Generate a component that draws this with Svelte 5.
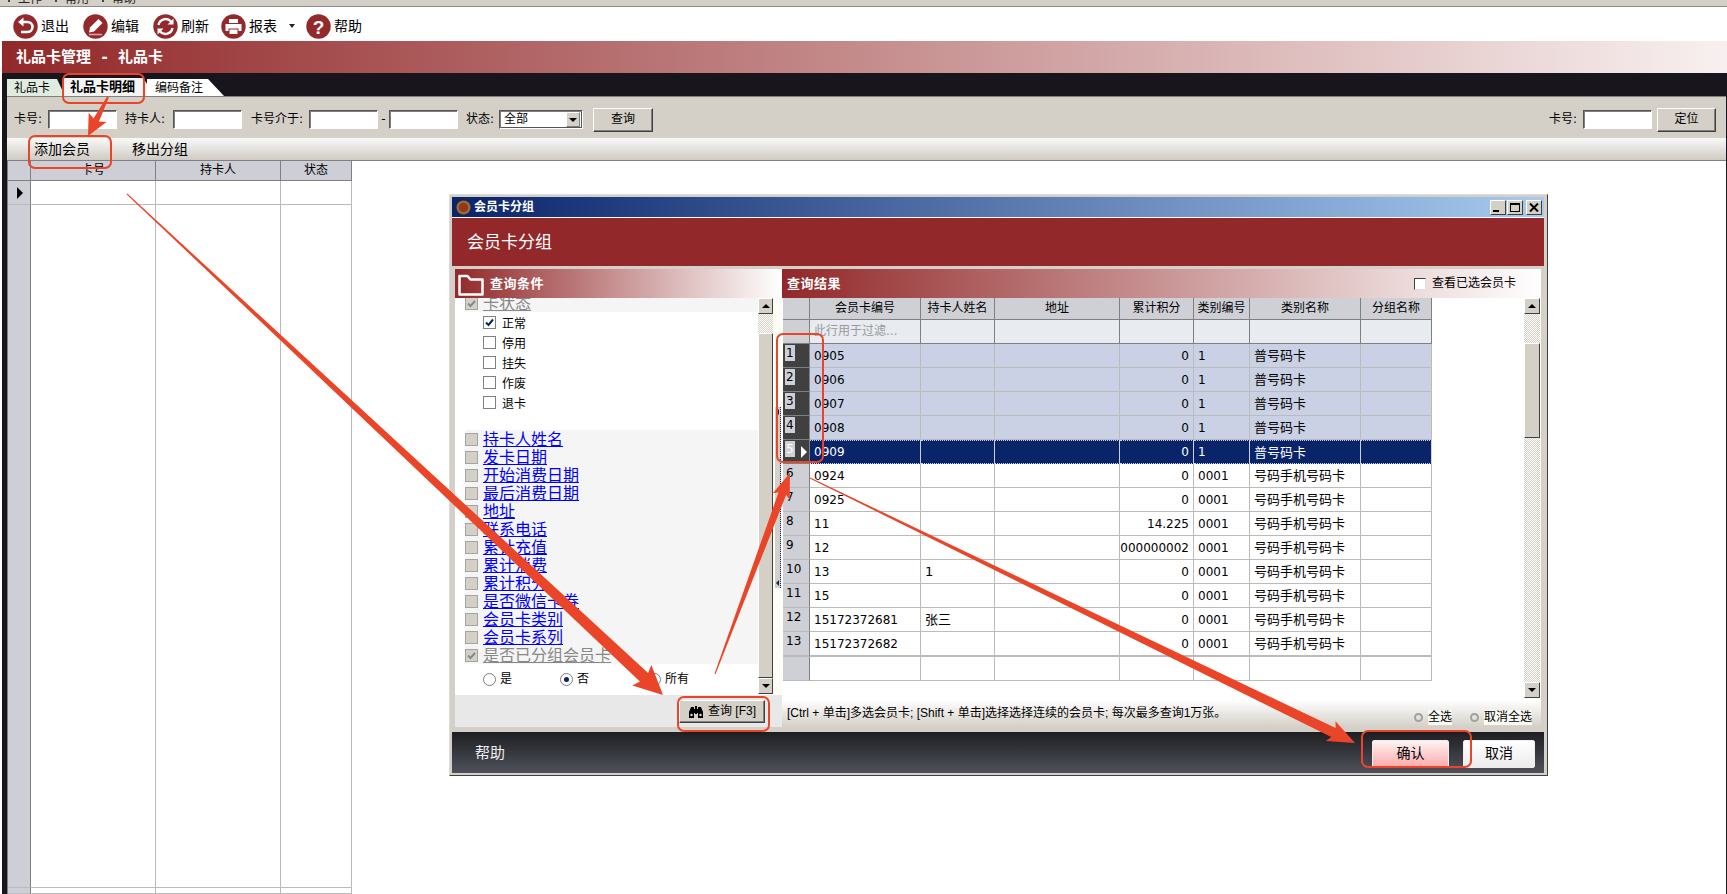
<script>
  const groups = ['持卡人姓名','发卡日期','开始消费日期','最后消费日期','地址','联系电话','累计充值','累计消费','累计积分','是否微信卡券','会员卡类别','会员卡系列'];
  const items = [['正常',true],['停用',false],['挂失',false],['作废',false],['退卡',false]];
  const cols = ['会员卡编号','持卡人姓名','地址','累计积分','类别编号','类别名称','分组名称'];
  const A = '普号码卡', B = '号码手机号码卡';
  const rows = [
    ['0905','','0','1',A],['0906','','0','1',A],['0907','','0','1',A],['0908','','0','1',A],['0909','','0','1',A],
    ['0924','','0','0001',B],['0925','','0','0001',B],['11','','14.225','0001',B],['12','','0000000002','0001',B],
    ['13','1','0','0001',B],['15','','0','0001',B],['15172372681','张三','0','0001',B],['15172372682','','0','0001',B]
  ];
  function arrow(x0, y0, x1, y1, w0, w1, hl, hw) {
    const d = Math.hypot(x1 - x0, y1 - y0), ux = (x1 - x0) / d, uy = (y1 - y0) / d, nx = -uy, ny = ux;
    const bx = x1 - ux * hl, by = y1 - uy * hl;
    const p = [
      [x0 + nx * w0 / 2, y0 + ny * w0 / 2],
      [bx + nx * w1 / 2, by + ny * w1 / 2],
      [bx + nx * hw - ux * 3, by + ny * hw - uy * 3],
      [x1, y1],
      [bx - nx * hw - ux * 3, by - ny * hw - uy * 3],
      [bx - nx * w1 / 2, by - ny * w1 / 2],
      [x0 - nx * w0 / 2, y0 - ny * w0 / 2]
    ];
    return p.map(q => q[0].toFixed(1) + ',' + q[1].toFixed(1)).join(' ');
  }
  const arrows = [
    arrow(108, 97, 88, 136, 2, 6, 18, 10),
    arrow(127, 194, 663, 695, 1, 12, 26, 14),
    arrow(715, 674, 790, 473, 1, 8, 22, 9),
    arrow(810, 478, 1355, 743, 1, 10, 24, 11)
  ];
  const boxes = [
    [63, 74, 81, 29], [29, 136, 82, 32], [777, 334, 46, 128], [678, 697, 91, 34], [1362, 731, 109, 36]
  ];
</script>

<div class="app">
  <div class="menu"><span>工作</span><span>常用</span><span>帮助</span></div>
  <div class="toolbar">
    <div class="tool">
      <svg class="ic" viewBox="0 0 25 25"><circle cx="12.5" cy="12.5" r="12.2" fill="#93292b"/><path d="M9 8h5.5a5 5 0 0 1 0 10H8" fill="none" stroke="#fff" stroke-width="2.6"/><path d="M10.5 3.5 5 8l5.500 4.500z" fill="#fff"/></svg>
      <span>退出</span>
    </div>
    <div class="tool">
      <svg class="ic" viewBox="0 0 25 25"><circle cx="12.500" cy="12.500" r="12.200" fill="#93292b"/><path d="M15.500 5l4 4-8.500 8.500-5 1 1-5z" fill="#fff"/><path d="M6 20.500h13" stroke="#d9a9aa" stroke-width="1.500"/></svg>
      <span>编辑</span>
    </div>
    <div class="tool">
      <svg class="ic" viewBox="0 0 25 25"><circle cx="12.500" cy="12.500" r="12.200" fill="#93292b"/><path d="M5.500 11a7.200 7.200 0 0 1 12.500-3.500M19.500 14a7.200 7.200 0 0 1-12.500 3.500" fill="none" stroke="#fff" stroke-width="2.400"/><path d="M20.500 4.500v6h-6zM4.500 20.500v-6h6z" fill="#fff"/></svg>
      <span>刷新</span>
    </div>
    <div class="tool tool-report">
      <svg class="ic" viewBox="0 0 25 25"><circle cx="12.500" cy="12.500" r="12.200" fill="#93292b"/><path d="M8 5h9v4H8z" fill="#fff"/><path d="M4.500 10h16v7h-3v-2.500h-10V17h-3z" fill="#fff"/><path d="M8.500 15.500h8V20h-8z" fill="#fff"/></svg>
      <span>报表</span>
      <i class="caret"></i>
    </div>
    <div class="tool">
      <svg class="ic" viewBox="0 0 25 25"><circle cx="12.500" cy="12.500" r="12.200" fill="#93292b"/><text x="12.500" y="19.500" text-anchor="middle" class="qm">?</text></svg>
      <span>帮助</span>
    </div>
  </div>
  <div class="pagehead">礼品卡管理  -  礼品卡</div>
  <div class="frame">
    <div class="tabs">
      <div class="tab t1">礼品卡</div>
      <div class="tab t2">礼品卡明细</div>
      <div class="tab t3">编码备注</div>
    </div>
    <div class="inner">
      <div class="filter">
        <label class="l34">卡号:</label><div class="inp"></div>
        <label class="l48">持卡人:</label><div class="inp"></div>
        <label class="l58">卡号介于:</label><div class="inp"></div>
        <span class="dash">-</span><div class="inp"></div>
        <label class="l36">状态:</label>
        <div class="select"><span>全部</span><b class="drop"><i class="tri-d"></i></b></div>
        <button class="btn q">查询</button>
        <div class="grow"></div>
        <label class="l34">卡号:</label><div class="inp"></div>
        <button class="btn loc">定位</button>
      </div>
      <div class="sub"><span>添加会员</span><span>移出分组</span></div>
      <div class="maingrid">
        <div class="mh rh"></div><div class="mh">卡号</div><div class="mh">持卡人</div><div class="mh">状态</div>
        <div class="mc rh"><i class="tri-r"></i></div><div class="mc"></div><div class="mc"></div><div class="mc"></div>
        <div class="mc rh"></div><div class="mc"></div><div class="mc"></div><div class="mc"></div>
        <div class="mc rh"></div><div class="mc"></div><div class="mc"></div><div class="mc"></div>
      </div>
    </div>
  </div>

  <div class="dialog">
    <div class="dtitle">
      <svg class="dico" viewBox="0 0 16 16"><circle cx="8" cy="8" r="7.500" fill="#a8672f"/><circle cx="8" cy="8" r="5" fill="#7a4220"/><circle cx="8" cy="8" r="2.500" fill="#b02a1c"/></svg>
      <span class="dname">会员卡分组</span>
      <div class="wbtns">
        <div class="wb"><i class="w-min"></i></div>
        <div class="wb"><i class="w-max"></i></div>
        <div class="wb close"><svg viewBox="0 0 10 9" width="10" height="9"><path d="M1 0.500l8 8M9 0.500l-8 8" stroke="#000" stroke-width="2"/></svg></div>
      </div>
    </div>
    <div class="banner">会员卡分组</div>
    <div class="panels">
      <section class="lp">
        <div class="ph lph">
          <svg class="folder" viewBox="0 0 26 22"><path d="M1.500 20.500V2h8l3 3.500h12v15z" fill="none" stroke="#fff" stroke-width="2.500" stroke-linejoin="round"/></svg>
          <strong>查询条件</strong>
        </div>
        <div class="lbody">
          <div class="list">
            <div class="g off first"><i class="cb gray chk"><svg viewBox="0 0 11 11"><path d="M2 5.500l2.500 2.500L9 3" fill="none" stroke="#888" stroke-width="2"/></svg></i><span>卡状态</span></div>
            {#each items as it}
              <div class="item"><i class="cb white">{#if it[1]}<svg viewBox="0 0 11 11"><path d="M2 5.500l2.500 2.500L9 2.500" fill="none" stroke="#0a246a" stroke-width="2"/></svg>{/if}</i><span>{it[0]}</span></div>
            {/each}
            <div class="spacer"></div>
            {#each groups as g}
              <div class="g"><i class="cb gray"></i><a href="#top">{g}</a></div>
            {/each}
            <div class="g off"><i class="cb gray chk"><svg viewBox="0 0 11 11"><path d="M2 5.500l2.500 2.500L9 3" fill="none" stroke="#888" stroke-width="2"/></svg></i><span>是否已分组会员卡</span></div>
            <div class="radios">
              <span class="r r1"><i class="rd"></i>是</span>
              <span class="r r2"><i class="rd on"></i>否</span>
              <span class="r r3"><i class="rd"></i>所有</span>
            </div>
          </div>
          <div class="sb sbl">
            <div class="sbtn"><i class="tri-u"></i></div>
            <div class="chk-track t1h"></div>
            <div class="thumb"></div>
            <div class="sbtn"><i class="tri-d"></i></div>
          </div>
          <div class="split"><div class="splitbar"><i class="sp-a"></i><i class="sp-b"></i></div></div>
        </div>
        <div class="lfoot">
          <button class="btn find">
            <svg viewBox="0 0 16 14" width="16" height="14"><path d="M1 13V7l2-5h3v2h1V1h2v3h1V2h3l2 5v6h-5V8H9v1H7V8H6v5z" fill="#000"/><circle cx="3.500" cy="10" r="1.200" fill="#ddd"/><circle cx="12.500" cy="10" r="1.200" fill="#ddd"/></svg>
            <span>查询 [F3]</span>
          </button>
        </div>
      </section>

      <section class="rp">
        <div class="ph rph">
          <strong>查询结果</strong>
          <i class="grow"></i>
          <i class="cb view"></i><span class="viewt">查看已选会员卡</span>
        </div>
        <div class="rbody">
          <div class="tablewrap">
            <div class="tr th">
              <div class="hc"></div>
              {#each cols as c}<div class="hc">{c}</div>{/each}
            </div>
            <div class="tr fl">
              <div class="hc"></div>
              <div class="fc ph-t">此行用于过滤...</div>
              {#each cols.slice(1) as c}<div class="fc"></div>{/each}
            </div>
            {#each rows as row, i}
              <div class="tr" class:sel={i < 4} class:cur={i === 4} class:last={i === 12}>
                <div class="td rn"><b>{i + 1}</b>{#if i === 4}<i class="tri-w"></i>{/if}</div>
                <div class="td">{row[0]}</div>
                <div class="td cn">{row[1]}</div>
                <div class="td"></div>
                <div class="td num"><span>{row[2]}</span></div>
                <div class="td">{row[3]}</div>
                <div class="td cn">{row[4]}</div>
                <div class="td"></div>
              </div>
            {/each}
            <div class="tr">
              <div class="td rn"></div><div class="td"></div><div class="td"></div><div class="td"></div>
              <div class="td"></div><div class="td"></div><div class="td"></div><div class="td"></div>
            </div>
          </div>
          <div class="sb sbr">
            <div class="sbtn"><i class="tri-u"></i></div>
            <div class="chk-track t2h"></div>
            <div class="thumb t2t"></div>
            <div class="chk-track fill"></div>
            <div class="sbtn"><i class="tri-d"></i></div>
          </div>
        </div>
        <div class="hint">
          <span class="tip">[Ctrl + 单击]多选会员卡; [Shift + 单击]选择选择连续的会员卡; 每次最多查询1万张。</span>
          <i class="grow"></i>
          <i class="ring"></i><span class="lnk">全选</span>
          <i class="ring r2nd"></i><span class="lnk">取消全选</span>
        </div>
      </section>
    </div>
    <div class="dfoot">
      <span class="help">帮助</span>
      <i class="grow"></i>
      <button class="fbtn ok">确认</button>
      <button class="fbtn no">取消</button>
    </div>
  </div>

  <svg class="anno" width="1727" height="894" viewBox="0 0 1727 894">
    {#each arrows as a}<polygon points={a} fill="#ea4528"/>{/each}
    {#each boxes as b}<rect x={b[0]} y={b[1]} width={b[2]} height={b[3]} rx="6" fill="none" stroke="#ea4528" stroke-width="2"/>{/each}
  </svg>
</div>

<style>
  :global(body) { margin: 0; background: #fff; }
  * { box-sizing: border-box; }
  i { display: block; font-style: normal; }
  .app {
    position: relative; width: 1727px; height: 894px; overflow: hidden;
    display: flex; flex-direction: column; background: #fff; color: #000;
    font: 12px/1.2 "DejaVu Sans", "Noto Sans CJK SC", sans-serif;
  }
  .grow { flex: 1; }
  .menu {
    height: 7px; flex: none; background: #d4d0c8; border-bottom: 1px solid #8c8c88;
    overflow: hidden; display: flex; gap: 23px; padding-left: 18px; color: #222; line-height: 1px;
  }
  .menu span { display: block; transform: translateY(-1px); position: relative; }
  .menu span::before { content: ""; position: absolute; left: -10px; top: 1px; width: 2px; height: 2px; background: #444; }
  .toolbar {
    height: 34px; flex: none; margin-left: 2px; padding: 4px 0 0 11px; display: flex; align-items: center; gap: 14px;
    font-size: 14px;
  }
  .tool { display: flex; align-items: center; gap: 3px; }
  .ic { width: 25px; height: 25px; flex: none; }
  .qm { font: bold 19px "Liberation Sans", sans-serif; fill: #fff; }
  .tool-report { margin-left: -2px; margin-right: -3px; }
  .caret { width: 0; height: 0; margin-left: 9px; border: 3px solid transparent; border-top: 4px solid #222; border-bottom: 0; }
  .pagehead {
    height: 32px; flex: none; margin-left: 2px; padding-left: 14px; display: flex; align-items: center;
    color: #fff; font-weight: 700; font-size: 15px; white-space: pre;
    background: linear-gradient(90deg, #922829, #f8f0f0);
  }
  .frame {
    flex: 1; min-height: 0; margin-left: 2px; padding: 0 1px 0 5px; background: #18161c;
    display: flex; flex-direction: column;
  }
  .tabs { height: 23px; flex: none; display: flex; align-items: flex-end; }
  .tab { height: 17px; padding-top: 1px; line-height: 16px; }
  .t1 { width: 58px; padding-left: 7px; background: #e0ece0; clip-path: polygon(0 0, 50px 0, 100% 100%, 0 100%); }
  .t2 {
    width: 91px; height: 18px; margin-left: -1px; padding-left: 6px; background: #f4f4f4; font-weight: 700; font-size: 13px;
    clip-path: polygon(0 0, 79px 0, 100% 100%, 0 100%); position: relative;
  }
  .t3 { width: 77px; margin-left: -8px; padding-left: 8px; background: #fff; clip-path: polygon(0 0, 61px 0, 100% 100%, 0 100%); }
  .inner { flex: 1; min-height: 0; display: flex; flex-direction: column; background: #fff; }
  .filter {
    height: 42px; flex: none; padding: 4px 10px 0 7px; display: flex; align-items: center; background: #d4d0c8;
    border-top: 1px solid #808080;
  }
  .filter label { display: block; }
  .l34 { width: 34px; }
  .l48 { width: 48px; margin-left: 8px; }
  .l58 { width: 58px; margin-left: 9px; }
  .l36 { width: 36px; margin-left: 5px; padding-left: 3px; white-space: nowrap; }
  .dash { width: 11px; text-align: center; }
  .inp {
    width: 69px; height: 19px; background: #fff; border: 1px solid; border-color: #555 #fff #fff #555;
    box-shadow: inset 1px 1px #808080;
  }
  .select {
    width: 84px; height: 19px; background: #fff; border: 1px solid; border-color: #555 #fff #fff #555;
    box-shadow: inset 1px 1px #808080, inset -1px -1px #555; display: flex; align-items: center;
    padding: 0 2px 0 4px; justify-content: space-between;
  }
  .drop { width: 14px; height: 15px; background: #d4d0c8; display: flex; align-items: center; justify-content: center; border: 1px solid; border-color: #fff #808080 #808080 #fff; }
  .tri-d { width: 0; height: 0; border: 4px solid transparent; border-top: 4px solid #000; border-bottom: 0; }
  .tri-u { width: 0; height: 0; border: 4px solid transparent; border-bottom: 4px solid #000; border-top: 0; }
  .btn {
    font: inherit; color: #000; background: #d4d0c8; border: 1px solid; border-color: #fff #404040 #404040 #fff;
    box-shadow: inset -1px -1px #808080; padding: 0;
  }
  .q { width: 60px; height: 24px; margin-left: 10px; }
  .loc { width: 59px; height: 24px; margin-left: 5px; }
  .sub {
    height: 23px; flex: none; padding-left: 27px; display: flex; gap: 42px; align-items: center; font-size: 14px;
    background: linear-gradient(#f9f9f7, #cfcbc4); border-bottom: 1px solid #808080;
  }
  .maingrid {
    flex: 1; min-height: 0; border-left: 1px solid #808080; display: grid;
    grid-template-columns: 23px 125px 125px 71px; grid-template-rows: 20px 24px 683px 6px; align-content: start; justify-content: start;
    overflow: hidden;
  }
  .mh {
    background: #cdced6; border-right: 1px solid #808080; border-bottom: 1px solid #808080;
    display: flex; align-items: center; justify-content: center; font-size: 12px;
  }
  .mc { border-right: 1px solid #bbb; border-bottom: 1px solid #bbb; }
  .rh { background: #cdced6; border-right-color: #808080; display: flex; align-items: center; justify-content: center; }
  .tri-r { width: 0; height: 0; border: 6px solid transparent; border-left: 6px solid #000; border-right: 0; margin-left: 2px; }

  .dialog {
    position: absolute; left: 449px; top: 194px; width: 1099px; height: 582px; padding: 2px 3px 2px 2px;
    background: #d4d0c8; border: 1px solid; border-color: #ddd #404040 #404040 #ddd;
    display: flex; flex-direction: column;
  }
  .dtitle {
    height: 21px; flex: none; border-bottom: 1px solid #fff; display: flex; align-items: center; padding: 0 2px 0 4px; gap: 3px;
    background: linear-gradient(90deg, #0a246a, #a6caf0); color: #fff; font-weight: 700; font-size: 12px;
  }
  .dico { width: 15px; height: 15px; }
  .dname { flex: 1; }
  .wbtns { display: flex; gap: 1px; }
  .wb {
    width: 16px; height: 15px; background: #d4d0c8; border: 1px solid; border-color: #fff #404040 #404040 #fff;
    display: flex; align-items: center; justify-content: center; position: relative;
  }
  .close { margin-left: 2px; }
  .w-min { width: 6px; height: 2px; background: #000; margin: 7px 4px 0 0; }
  .w-max { width: 10px; height: 9px; border: 1px solid #000; border-top-width: 2px; }
  .banner {
    height: 48px; flex: none; background: #922829; color: #fff; font-size: 17px; padding-left: 15px;
    display: flex; align-items: center;
  }
  .panels { height: 458px; flex: none; margin: 3px 3px 5px 3px; display: flex; background: #fff; }
  .lp { width: 327px; flex: none; display: flex; flex-direction: column; background: #fff; }
  .rp { flex: 1; min-width: 0; display: flex; flex-direction: column; background: #fff; }
  .ph {
    height: 29px; flex: none; display: flex; align-items: center; color: #fff; font-size: 13px; position: relative; z-index: 1;
  }
  .ph strong { font-weight: 700; letter-spacing: 0.5px; }
  .lph { background: linear-gradient(90deg, #922829, #fff); padding-left: 3px; gap: 6px; }
  .folder { width: 26px; height: 22px; margin-top: 3px; }
  .rph { background: linear-gradient(90deg, #922829, #fff); padding: 0 25px 0 5px; }
  .lbody { flex: 1; min-height: 0; display: flex; }
  .list { width: 303px; flex: none; padding-left: 10px; overflow: hidden; }
  .g {
    height: 18px; display: flex; align-items: center; gap: 5px; background: #f5f5f5; font-size: 16px; white-space: nowrap;
  }
  .first { margin-top: -4px; }
  .g a { color: #0000ff; text-decoration: underline; line-height: 18px; padding-top: 2px; }
  .off span { color: #888; text-decoration: underline; padding-top: 2px; }
  .cb { width: 13px; height: 13px; flex: none; }
  .cb svg { display: block; width: 11px; height: 11px; }
  .gray { background: #d4d0c8; border: 1px solid #a5a5a0; }
  .white { background: #fff; border: 1px solid #808080; }
  .item { height: 20px; display: flex; align-items: center; gap: 6px; padding: 1px 0 0 18px; }
  .item span { padding-top: 3px; }
  .spacer { height: 18px; }
  .radios { height: 30px; display: flex; align-items: center; padding-left: 18px; padding-top: 1px; }
  .r { display: flex; align-items: center; gap: 4px; }
  .r1 { width: 77px; }
  .r2 { width: 88px; }
  .rd {
    width: 13px; height: 13px; border-radius: 50%; border: 1px solid #808080; background: #fff; display: flex;
    align-items: center; justify-content: center;
  }
  .rd.on::after { content: ""; width: 5px; height: 5px; border-radius: 50%; background: #0a246a; }
  .sb { display: flex; flex-direction: column; flex: none; }
  .sbl { width: 15px; height: 396px; }
  .sbr { width: 16px; height: 400px; margin-left: auto; margin-right: 1px; }
  .sbtn {
    height: 16px; flex: none; background: #d4d0c8; border: 1px solid; border-color: #fff #404040 #404040 #fff;
    display: flex; align-items: center; justify-content: center;
  }
  .chk-track { flex: none; background: repeating-conic-gradient(#d4d0c8 0 25%, #fff 0 50%) 0 0 / 2px 2px; }
  .t1h { height: 19px; }
  .t2h { height: 29px; }
  .chk-track.fill { flex: 1; }
  .thumb {
    flex: 1; background: #d4d0c8; border: 1px solid; border-color: #fff #404040 #404040 #fff;
  }
  .t2t { flex: none; height: 95px; }
  .split { width: 9px; flex: none; background: #fdfdf5; padding: 109px 1px 0 2px; }
  .splitbar {
    position: relative; width: 6px; height: 181px; background: #d4d0c8;
    border-right: 1px dotted #0a246a;
  }
  .sp-a, .sp-b { position: absolute; left: 1px; width: 0; height: 0; border: 3px solid transparent; border-right: 3px solid #0a246a; border-left: 0; }
  .sp-a { top: 2px; }
  .sp-b { bottom: 2px; }
  .lfoot { height: 32px; flex: none; background: #e8e8e8; padding: 5px 17px 0 0; display: flex; justify-content: flex-end; align-items: flex-start; }
  .find { width: 86px; height: 23px; display: flex; align-items: center; justify-content: center; gap: 4px; font-family: "Liberation Sans", "Noto Sans CJK SC", sans-serif; }
  .viewt { margin-left: 6px; color: #000; font-size: 12px; }
  .view { background: #fff; border: 1px solid; border-color: #404040 #ddd #ddd #404040; width: 12px; height: 12px; }
  .rbody { flex: 1; min-height: 0; display: flex; }
  .tablewrap { width: 649px; flex: none; margin-left: 1px; }
  .tr {
    display: grid; grid-template-columns: 27px 111px 74px 125px 74px 56px 111px 71px; height: 24px;
  }
  .tr.th { height: 22px; }
  .hc {
    background: #cfd0d6; border-right: 1px solid #808080; border-bottom: 1px solid #808080;
    display: flex; align-items: center; justify-content: center; white-space: nowrap; overflow: hidden;
  }
  .fc { background: #e8ebef; border-right: 1px solid #808080; border-bottom: 1px solid #808080; display: flex; align-items: center; padding-left: 4px; }
  .fl .hc { background: #cfd0d6; }
  .ph-t { color: #999; }
  .td {
    border-right: 1px solid #bbb; border-bottom: 1px solid #bbb; display: flex; align-items: center; padding: 1px 0 0 4px;
    white-space: nowrap; overflow: hidden; font-size: 12px; background: #fff;
  }
  .td.cn { font-size: 13px; }
  .td.num { justify-content: flex-end; padding: 1px 4px 0 0; }
  .num span { flex: none; }
  .sel .td { background: #cbd1e4; }
  .cur .td {
    background: #0a246a; color: #fff; border-right-color: #cbd1e4; border-bottom: 1px dotted #cbd1e4; border-top: 1px dotted #cbd1e4;
  }
  .tr.last { height: 25px; }
  .last .td { border-bottom-width: 2px; }
  .td.rn {
    background: #cfd0d6; border-right-color: #808080; padding: 0 0 0 2px; align-items: flex-start; position: relative;
  }
  .rn b { font-weight: 400; line-height: 16px; padding: 0 1px; margin-top: 1px; }
  .sel .td.rn, .cur .td.rn { background: #404040; border: 1px solid #808080; border-width: 0 1px 1px 0; }
  .sel .rn b, .cur .rn b { background: #cfd0d6; color: #000; }
  .cur .rn b { color: #fff; }
  .tri-w { position: absolute; left: 18px; top: 6px; width: 0; height: 0; border: 6px solid transparent; border-left: 6px solid #fff; border-right: 0; }
  .hint {
    height: 27px; flex: none; padding: 0 9px 0 5px; display: flex; align-items: center; white-space: nowrap;
    background: linear-gradient(#fff, #d4d0c8);
  }
  .tip { font-family: "Liberation Sans", "Noto Sans CJK SC", sans-serif; }
  .lnk { background: #fafaf4; margin-top: 8px; }
  .ring { width: 9px; height: 9px; border-radius: 50%; border: 2px solid #a0a0a0; margin: 8px 5px 0 0; }
  .r2nd { margin-left: 18px; }
  .dfoot {
    height: 41px; flex: none; background: linear-gradient(#1e1e22, #4f525b); display: flex; align-items: center;
    padding: 0 9px 0 23px; color: #eee; font-size: 15px;
  }
  .fbtn {
    width: 77px; height: 28px; font: inherit; font-size: 14px; color: #000; border: 1px solid #eee; border-radius: 2px; padding: 0; margin-top: 2px;
  }
  .ok { background: linear-gradient(#fdf3f3, #ffaaaa); margin-right: 14px; }
  .no { width: 72px; background: linear-gradient(#fff, #ececec); }
  .anno { position: absolute; left: 0; top: 0; pointer-events: none; z-index: 5; }
</style>
